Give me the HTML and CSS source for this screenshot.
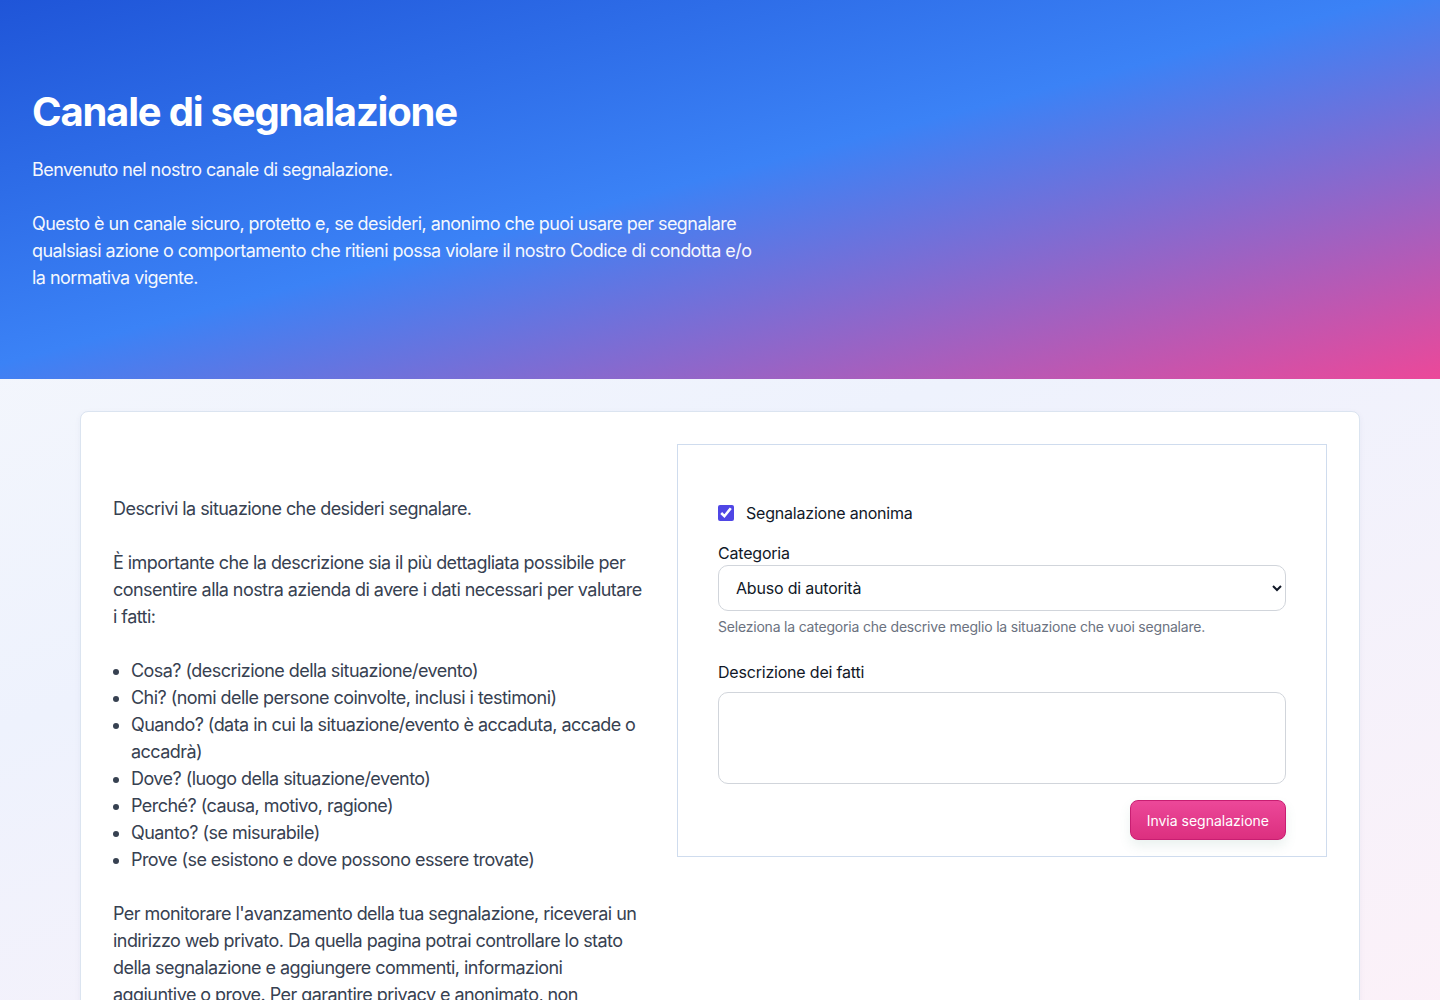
FILE: index.html
```html
<!DOCTYPE html>
<html lang="it">
<head>
	<meta charset="utf-8">
	<title>Canale di segnalazione</title>
	<link rel="stylesheet" href="styles.css">
</head>
<body>
<header class="hero">
	<h1>Canale di segnalazione</h1>
	<p>Benvenuto nel nostro canale di segnalazione.</p>
	<p>Questo è un canale sicuro, protetto e, se desideri, anonimo che puoi usare per segnalare qualsiasi azione o comportamento che ritieni possa violare il nostro Codice di condotta e/o la normativa vigente.</p>
</header>
<main class="page">
	<section class="card">
		<div class="intro">
			<p>Descrivi la situazione che desideri segnalare.</p>
			<p>È importante che la descrizione sia il più dettagliata possibile per consentire alla nostra azienda di avere i dati necessari per valutare i fatti:</p>
			<ul>
				<li>Cosa? (descrizione della situazione/evento)</li>
				<li>Chi? (nomi delle persone coinvolte, inclusi i testimoni)</li>
				<li>Quando? (data in cui la situazione/evento è accaduta, accade o accadrà)</li>
				<li>Dove? (luogo della situazione/evento)</li>
				<li>Perché? (causa, motivo, ragione)</li>
				<li>Quanto? (se misurabile)</li>
				<li>Prove (se esistono e dove possono essere trovate)</li>
			</ul>
			<p>Per monitorare l'avanzamento della tua segnalazione, riceverai un indirizzo web privato. Da quella pagina potrai controllare lo stato della segnalazione e aggiungere commenti, informazioni aggiuntive o prove. Per garantire privacy e anonimato, non conserviamo questo indirizzo: assicurati di salvarlo.</p>
		</div>
		<form class="report" onsubmit="return false;">
			<label class="check">
				<input type="checkbox" checked>
				<span>Segnalazione anonima</span>
			</label>
			<div class="field">
				<label for="category">Categoria</label>
				<select id="category">
					<option>Abuso di autorità</option>
					<option>Conflitto di interessi</option>
					<option>Frode</option>
					<option>Altro</option>
				</select>
				<small>Seleziona la categoria che descrive meglio la situazione che vuoi segnalare.</small>
			</div>
			<div class="field">
				<label for="facts">Descrizione dei fatti</label>
				<textarea id="facts"></textarea>
			</div>
			<div class="actions">
				<button type="submit">Invia segnalazione</button>
			</div>
		</form>
	</section>
</main>
</body>
</html>
```
FILE: styles.css
```css
* {
	margin: 0;
	padding: 0;
	box-sizing: border-box;
}
body {
	font-family: Inter, "Noto Sans", sans-serif;
	color: #111827;
	background: linear-gradient(160deg, #f8fafc 0%, #eef2fd 45%, #fdf1f8 100%);
	min-height: 100vh;
}
.hero {
	height: 379px;
	padding: 88px 32px 0;
	color: #fff;
	background: linear-gradient(to bottom right, #1f55d8 0%, #3b82f6 48%, #ec4899 100%);
}
.hero h1 {
	font-size: 40px;
	font-weight: 700;
	line-height: 48px;
	letter-spacing: -1.2px;
	margin-bottom: 20px;
}
.hero p {
	max-width: 730px;
	font-size: 18px;
	line-height: 27px;
	letter-spacing: -0.55px;
	margin-bottom: 27px;
	opacity: .95;
}
.page {
	padding: 32px 80px 0;
}
.card {
	display: grid;
	grid-template-columns: 532px 1fr;
	column-gap: 32px;
	align-items: start;
	padding: 32px;
	background: #fff;
	border: 1px solid #dbe4f0;
	border-radius: 8px;
	box-shadow: 0 2px 6px rgba(30, 60, 120, .05);
}
.intro {
	padding-top: 51px;
	font-size: 18px;
	line-height: 27px;
	letter-spacing: -0.55px;
	color: #374151;
}
.intro p {
	margin-bottom: 27px;
}
.intro ul {
	margin-bottom: 27px;
	padding-left: 18px;
}
.report {
	border: 1px solid #cfdcee;
	padding: 56px 40px 16px;
	letter-spacing: -0.2px;
}
.check {
	display: flex;
	align-items: center;
	gap: 12px;
	font-size: 16px;
	line-height: 24px;
	margin-bottom: 16px;
}
.check input {
	width: 16px;
	height: 16px;
	accent-color: #4f46e5;
}
.field {
	margin-bottom: 16px;
}
.field label {
	display: block;
	font-size: 16px;
	line-height: 24px;
}
.field select,
.field textarea {
	display: block;
	width: 100%;
	font-family: inherit;
	font-size: 16px;
	letter-spacing: -0.2px;
	color: #111827;
	background: #fff;
	border: 1px solid #d1d5db;
	border-radius: 10px;
}
.field select {
	height: 46px;
	padding: 0 12px 0 13px;
}
.field textarea {
	height: 92px;
	resize: none;
	margin-top: 8px;
}
.field small {
	display: block;
	margin-top: 6px;
	font-size: 14px;
	line-height: 20px;
	color: #6b7280;
	margin-bottom: 23px;
}
.actions {
	display: flex;
	justify-content: flex-end;
}
.actions button {
	height: 40px;
	padding: 0 16px;
	font-family: inherit;
	font-size: 14px;
	color: #fff;
	border: 1px solid #c81e72;
	border-radius: 8px;
	background: linear-gradient(#ec4899, #dc2f7f);
	box-shadow: 0 6px 12px rgba(80, 140, 120, .12);
}
```
